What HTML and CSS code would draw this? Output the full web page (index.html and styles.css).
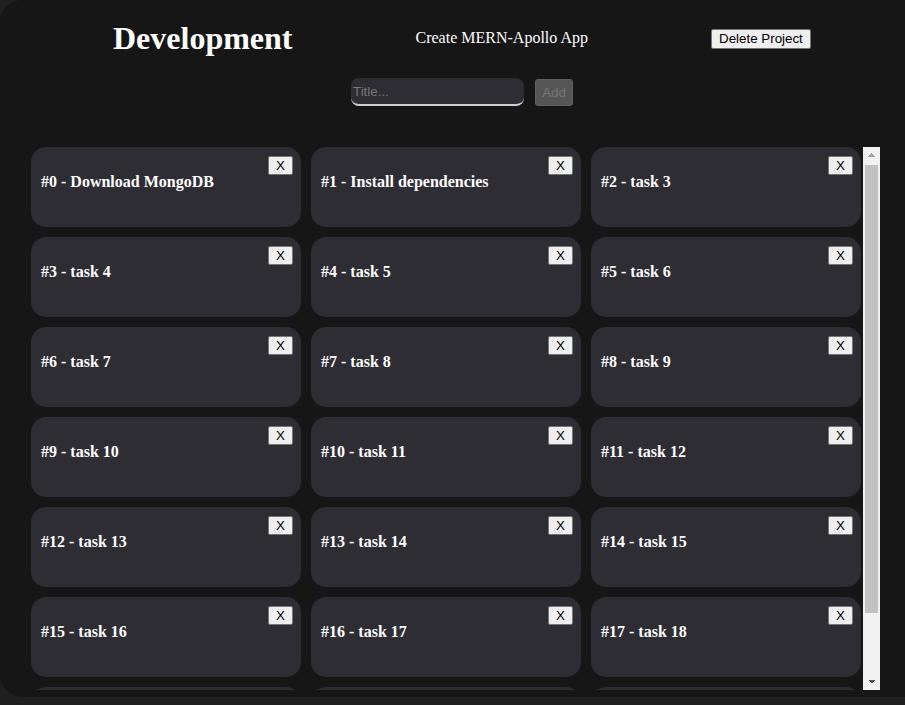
FILE: index.html
```html
<!DOCTYPE html>
<html>
<head>
<meta charset="utf-8">
<link rel="stylesheet" href="styles.css">
</head>
<body>
<div class="app">
  <header class="header">
    <h1 class="project-title">Development</h1>
    <span class="app-name">Create MERN-Apollo App</span>
    <button class="delete-btn">Delete Project</button>
  </header>
  <form class="add-form">
    <input class="title-input" type="text" placeholder="Title...">
    <button class="add-btn" type="button" disabled>Add</button>
  </form>
  <div class="list-frame">
    <div class="task-list">
      <div class="task"><h4 class="task-title">#0 - Download MongoDB</h4><button class="x-btn">X</button></div>
      <div class="task"><h4 class="task-title">#1 - Install dependencies</h4><button class="x-btn">X</button></div>
      <div class="task"><h4 class="task-title">#2 - task 3</h4><button class="x-btn">X</button></div>
      <div class="task"><h4 class="task-title">#3 - task 4</h4><button class="x-btn">X</button></div>
      <div class="task"><h4 class="task-title">#4 - task 5</h4><button class="x-btn">X</button></div>
      <div class="task"><h4 class="task-title">#5 - task 6</h4><button class="x-btn">X</button></div>
      <div class="task"><h4 class="task-title">#6 - task 7</h4><button class="x-btn">X</button></div>
      <div class="task"><h4 class="task-title">#7 - task 8</h4><button class="x-btn">X</button></div>
      <div class="task"><h4 class="task-title">#8 - task 9</h4><button class="x-btn">X</button></div>
      <div class="task"><h4 class="task-title">#9 - task 10</h4><button class="x-btn">X</button></div>
      <div class="task"><h4 class="task-title">#10 - task 11</h4><button class="x-btn">X</button></div>
      <div class="task"><h4 class="task-title">#11 - task 12</h4><button class="x-btn">X</button></div>
      <div class="task"><h4 class="task-title">#12 - task 13</h4><button class="x-btn">X</button></div>
      <div class="task"><h4 class="task-title">#13 - task 14</h4><button class="x-btn">X</button></div>
      <div class="task"><h4 class="task-title">#14 - task 15</h4><button class="x-btn">X</button></div>
      <div class="task"><h4 class="task-title">#15 - task 16</h4><button class="x-btn">X</button></div>
      <div class="task"><h4 class="task-title">#16 - task 17</h4><button class="x-btn">X</button></div>
      <div class="task"><h4 class="task-title">#17 - task 18</h4><button class="x-btn">X</button></div>
      <div class="task"><h4 class="task-title">#18 - task 19</h4><button class="x-btn">X</button></div>
      <div class="task"><h4 class="task-title">#19 - task 20</h4><button class="x-btn">X</button></div>
      <div class="task"><h4 class="task-title">#20 - task 21</h4><button class="x-btn">X</button></div>
    </div>
    <div class="scrollbar">
      <div class="arrow arrow-up"></div>
      <div class="track"><div class="thumb"></div></div>
      <div class="arrow arrow-down"></div>
    </div>
  </div>
</div>
</body>
</html>
```

FILE: styles.css
```css
html, body {
  margin: 0;
  padding: 0;
  background: #1f1f1f;
  overflow: hidden;
  font-family: "Liberation Serif", "Times New Roman", serif;
}

.app {
  box-sizing: border-box;
  width: 905px;
  height: 697px;
  background: #161616;
  border-radius: 22px 0 0 22px;
  padding-top: 19px;
  color: #fff;
}

.header {
  display: flex;
  align-items: center;
  gap: 123px;
  padding-left: 113px;
  height: 38px;
}

.project-title {
  margin: 0;
  font-size: 32px;
  font-weight: bold;
  line-height: 38px;
}

.app-name {
  font-size: 16px;
}

.delete-btn {
  font-family: "Liberation Sans", Arial, sans-serif;
  font-size: 13.33px;
  width: 100px;
  height: 20px;
  padding: 1px 4px;
  background: #efefef;
  color: #000;
  border: 1px solid #767676;
  border-radius: 2px;
  margin-top: 1px;
}

.add-form {
  display: flex;
  align-items: flex-start;
  gap: 11px;
  margin: 21px 0 0 351px;
}

.title-input {
  box-sizing: border-box;
  width: 173px;
  height: 28px;
  background: #2e2d33;
  border: none;
  border-bottom: 2px solid #cfcfcf;
  border-radius: 8px;
  padding: 0 2px;
  color: #ddd;
  font-family: "Liberation Sans", Arial, sans-serif;
  font-size: 13.33px;
  outline: none;
}

.title-input::placeholder {
  color: #767676;
}

.add-btn {
  box-sizing: border-box;
  width: 38px;
  height: 27px;
  margin-top: 1px;
  background: #555555;
  border: 1px solid #606060;
  border-radius: 3px;
  color: #767676;
  font-family: "Liberation Sans", Arial, sans-serif;
  font-size: 13.33px;
  padding: 0;
}

.list-frame {
  display: flex;
  width: 849px;
  height: 543px;
  margin: 41px 0 0 31px;
}

.task-list {
  box-sizing: border-box;
  width: 832px;
  height: 543px;
  overflow: hidden;
  display: grid;
  grid-template-columns: 270px 270px 270px;
  grid-auto-rows: 80px;
  gap: 10px;
  align-content: start;
}

.scrollbar {
  width: 17px;
  height: 543px;
  background: #f1f1f1;
  display: flex;
  flex-direction: column;
}

.arrow {
  height: 17px;
  flex: none;
  background-repeat: no-repeat;
  background-size: 4px 4px, 4px 4px;
}

.arrow-up {
  background-image:
    linear-gradient(to top left, #a3a3a3 50%, transparent 50%),
    linear-gradient(to top right, #a3a3a3 50%, transparent 50%);
  background-position: 4.5px 6px, 8.5px 6px;
}

.arrow-down {
  background-image:
    linear-gradient(to bottom left, #505050 50%, transparent 50%),
    linear-gradient(to bottom right, #505050 50%, transparent 50%);
  background-position: 4.5px 7px, 8.5px 7px;
}

.track {
  flex: 1;
  padding: 1px 2px 0 2px;
}

.thumb {
  height: 448px;
  background: #c1c1c1;
}

.task {
  box-sizing: border-box;
  background: #2e2d33;
  border-radius: 15px;
  padding: 9px 8px 0 10px;
  display: flex;
  justify-content: space-between;
  align-items: flex-start;
}

.task-title {
  margin: 17px 0 0 0;
  font-size: 16px;
  font-weight: bold;
  line-height: 18px;
  color: #fff;
}

.x-btn {
  font-family: "Liberation Sans", Arial, sans-serif;
  font-size: 13.33px;
  width: 25px;
  height: 19px;
  padding: 0;
  background: #efefef;
  color: #000;
  border: 1px solid #767676;
  border-radius: 2px;
  line-height: 15px;
}
```
